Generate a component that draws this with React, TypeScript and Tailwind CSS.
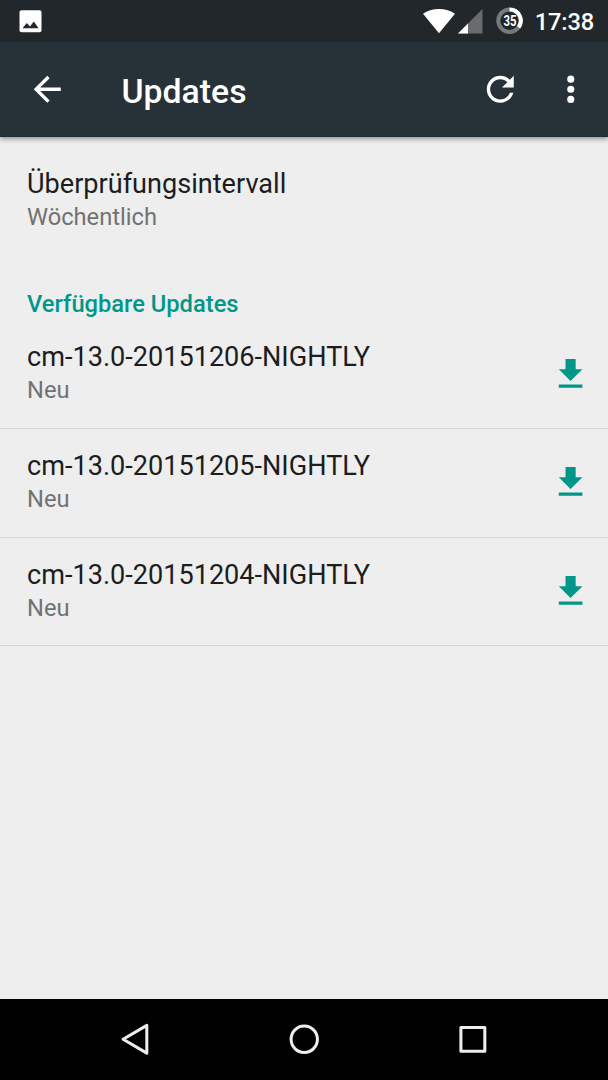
const updates = [
  "cm-13.0-20151206-NIGHTLY",
  "cm-13.0-20151205-NIGHTLY",
  "cm-13.0-20151204-NIGHTLY",
];

const icon = "h-[40.53px] w-[40.53px] shrink-0";

function StatusBar() {
  return (
    <div className="flex h-[42px] items-center bg-[#22272b] pl-[19px] pr-[14px] text-white">
      <svg className="h-[23px] w-[23px]" viewBox="0 0 23 23">
        <rect x="0.5" y="0.3" width="22" height="22" rx="2" fill="#fff" />
        <path d="M3.5 18.3 7.8 13l3.2 3.6 3.8-5.1 4.8 6.8z" fill="#22272b" />
      </svg>
      <svg className="ml-auto h-[42px] w-[32px]" viewBox="0 0 32 42">
        <path d="M16 33.3 0 13.7C4.2 10.8 9.8 9 16 9s11.8 1.8 16 4.7z" fill="#fff" />
      </svg>
      <svg className="ml-[3px] h-[42px] w-[25px]" viewBox="0 0 25 42">
        <path d="M0 33.5 24.5 9v24.5z" fill="#686c6f" />
        <path d="M0 33.5 10 23.5v10z" fill="#fff" />
      </svg>
      <svg className="ml-[13px] h-[42px] w-[27px]" viewBox="0 0 27 42">
        <circle cx="13.5" cy="20.7" r="11.2" fill="none" stroke="#777a7c" strokeWidth="4" />
        <path d="M13.5 9.5A11.2 11.2 0 0 1 22.6 27.3" fill="none" stroke="#fff" strokeWidth="4" />
        <text
          x="7.4"
          y="25.8"
          textLength="13"
          lengthAdjust="spacingAndGlyphs"
          fill="#fff"
          className="font-[Roboto,sans-serif] text-[14px] font-bold"
        >
          35
        </text>
      </svg>
      <span className="mt-[2px] ml-[12px] text-[23.64px] leading-[28px] font-medium tracking-[-0.15px]">17:38</span>
    </div>
  );
}

function Toolbar() {
  return (
    <header className="relative flex h-[95px] items-center border-b border-[#1b2a33] bg-[#273238] pl-[27px] pr-[17px] text-white shadow-[0_2px_5px_rgba(0,0,0,0.4)]">
      <svg className={icon} viewBox="0 0 24 24" fill="currentColor">
        <path d="M20 11H7.83l5.59-5.59L12 4l-8 8 8 8 1.41-1.41L7.83 13H20v-2z" />
      </svg>
      <h1 className="mt-[6px] ml-[54px] flex-1 text-[33.78px] leading-[40px] font-medium">Updates</h1>
      <svg className={icon} viewBox="0 0 24 24" fill="currentColor">
        <path d="M17.65 6.35C16.2 4.9 14.21 4 12 4c-4.42 0-7.99 3.58-7.99 8s3.57 8 7.99 8c3.73 0 6.84-2.55 7.73-6h-2.08c-.82 2.33-3.04 4-5.65 4-3.31 0-6-2.69-6-6s2.69-6 6-6c1.66 0 3.14.69 4.22 1.78L13 11h7V4l-2.35 2.35z" />
      </svg>
      <svg className={`${icon} ml-[30px]`} viewBox="0 0 24 24" fill="currentColor">
        <circle cx="12.3" cy="6" r="2.1" />
        <circle cx="12.3" cy="12" r="2.1" />
        <circle cx="12.3" cy="18" r="2.1" />
      </svg>
    </header>
  );
}

function Entry({ title, summary }: { title: string; summary: string }) {
  return (
    <div className="flex flex-col gap-[3px]">
      <p className="text-[27.1px] leading-[32px] text-[#1b1d1e]">{title}</p>
      <p className="text-[23.7px] leading-[28px] text-[#727272]">{summary}</p>
    </div>
  );
}

export default function App() {
  return (
    <div className="flex h-[1080px] w-[608px] flex-col overflow-hidden bg-[#eeeeee] font-[Roboto,sans-serif]">
      <StatusBar />
      <Toolbar />
      <main className="flex-1 pt-[31px]">
        <div className="px-[27px]">
          <Entry title="Überprüfungsintervall" summary="Wöchentlich" />
          <h2 className="mt-[59px] text-[23.7px] leading-[28px] font-medium text-[#009688]">Verfügbare Updates</h2>
        </div>
        <ul className="pt-[2px]">
          {updates.map((name) => (
            <li
              key={name}
              className="flex h-[108.8px] items-center justify-between border-b border-[#d5d5d5] pb-[2px] pr-[17px] pl-[27px]"
            >
              <Entry title={name} summary="Neu" />
              <svg className={`${icon} mt-[2px]`} viewBox="0 0 24 24" fill="#009688">
                <path d="M19.2 9h-4V3h-6v6h-4l7 7 7-7zM5.2 18v2h14v-2h-14z" />
              </svg>
            </li>
          ))}
        </ul>
      </main>
      <nav className="flex h-[81px] items-center justify-center gap-[128px] bg-black">
        <svg className={icon} viewBox="0 0 40 40" fill="none" stroke="#eeeeee" strokeWidth="3" strokeLinejoin="round">
          <path d="M8 20 31.4 6.3v27.4z" />
        </svg>
        <svg className={icon} viewBox="0 0 40 40" fill="none" stroke="#eeeeee" strokeWidth="3">
          <circle cx="20" cy="20" r="13" />
        </svg>
        <svg className={icon} viewBox="0 0 40 40" fill="none" stroke="#eeeeee" strokeWidth="3" strokeLinejoin="round">
          <rect x="8.8" y="8.3" width="23.6" height="23.6" />
        </svg>
      </nav>
    </div>
  );
}
